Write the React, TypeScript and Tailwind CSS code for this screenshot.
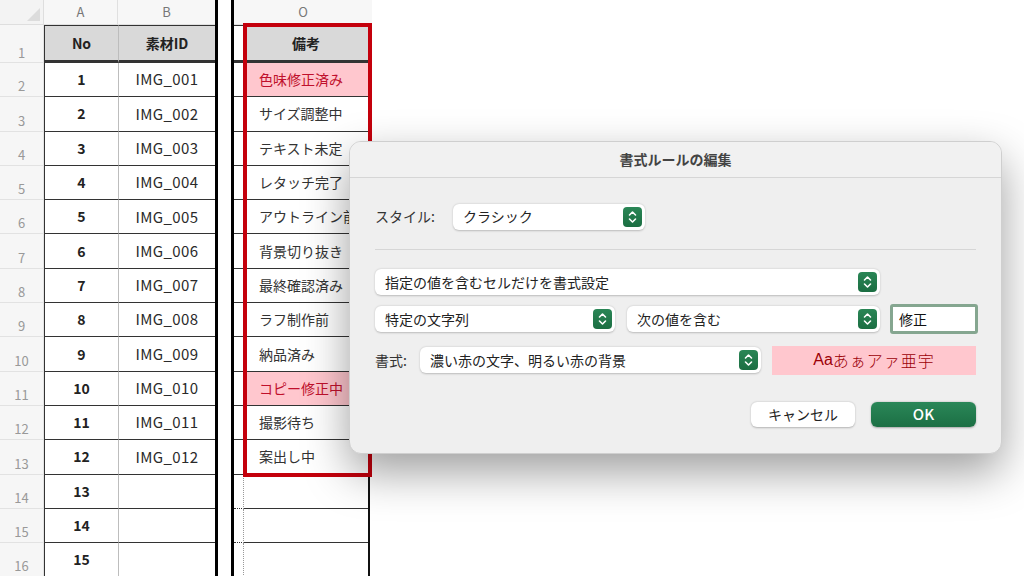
import React from "react";

const rows: { no: number; id: string; note: string; hit?: boolean }[] = [
  { no: 1, id: "IMG_001", note: "色味修正済み", hit: true },
  { no: 2, id: "IMG_002", note: "サイズ調整中" },
  { no: 3, id: "IMG_003", note: "テキスト未定" },
  { no: 4, id: "IMG_004", note: "レタッチ完了" },
  { no: 5, id: "IMG_005", note: "アウトライン前" },
  { no: 6, id: "IMG_006", note: "背景切り抜き" },
  { no: 7, id: "IMG_007", note: "最終確認済み" },
  { no: 8, id: "IMG_008", note: "ラフ制作前" },
  { no: 9, id: "IMG_009", note: "納品済み" },
  { no: 10, id: "IMG_010", note: "コピー修正中", hit: true },
  { no: 11, id: "IMG_011", note: "撮影待ち" },
  { no: 12, id: "IMG_012", note: "案出し中" },
  { no: 13, id: "", note: "" },
  { no: 14, id: "", note: "" },
  { no: 15, id: "", note: "" },
];

function Bar() {
  return <div className="w-[3px] shrink-0 self-stretch bg-black" />;
}

function Gap() {
  return <div className="w-[13px] shrink-0 self-stretch bg-white" />;
}

function Stepper() {
  return (
    <div className="flex h-[20px] w-[19px] items-center justify-center rounded-[4px] bg-gradient-to-b from-[#2a8656] to-[#1b6e42]">
      <svg width="9" height="14" viewBox="0 0 9 14" fill="none">
        <path d="M1.5 5L4.5 2L7.5 5" stroke="white" strokeWidth="1.6" strokeLinecap="round" strokeLinejoin="round" />
        <path d="M1.5 9L4.5 12L7.5 9" stroke="white" strokeWidth="1.6" strokeLinecap="round" strokeLinejoin="round" />
      </svg>
    </div>
  );
}

function Select({ text, className }: { text: string; className: string }) {
  return (
    <div
      className={
        "flex h-[26px] shrink-0 items-center justify-between rounded-[6px] bg-white pl-[10px] pr-[3px] text-[14px] text-[#222] shadow-[0_0.5px_2px_rgba(0,0,0,0.22)] " +
        className
      }
    >
      <span>{text}</span>
      <Stepper />
    </div>
  );
}

export default function App() {
  return (
    <div
      className="relative h-[576px] w-[1024px] overflow-hidden bg-white"
      style={{ fontFamily: '"Noto Sans CJK JP", "Noto Sans", sans-serif' }}
    >
      {/* column letters */}
      <div className="flex h-[25px]">
        <div className="relative w-[44px] shrink-0 border-r border-b border-[#dedede] bg-[#f3f3f3]">
          <svg className="absolute right-[3px] bottom-[3px]" width="13" height="13" viewBox="0 0 13 13">
            <polygon points="13,0 13,13 0,13" fill="#dcdcdc" />
          </svg>
        </div>
        <div className="flex w-[74px] shrink-0 items-center justify-center border-r border-b border-[#e0e0e0] bg-[#f7f7f7] text-[13px] text-[#777]">
          A
        </div>
        <div className="flex w-[97px] shrink-0 items-center justify-center border-b border-[#e0e0e0] bg-[#f7f7f7] text-[13px] text-[#777]">
          B
        </div>
        <Bar />
        <Gap />
        <Bar />
        <div className="flex w-[138px] shrink-0 items-center justify-center border-b border-[#e0e0e0] bg-[#f7f7f7] text-[13px] text-[#777]">
          O
        </div>
      </div>

      {/* header row */}
      <div className="flex h-[38px]">
        <div className="flex w-[44px] shrink-0 items-start justify-center border-r border-b border-[#e2e2e2] bg-[#f6f6f6] pt-[18px] text-[13px] leading-[20px] text-[#999]">
          1
        </div>
        <div className="flex w-[74px] shrink-0 items-center justify-center border-y-[3px] border-l-[1.5px] border-t-[1.5px] border-[#333] border-b-double bg-[#d9d9d9] text-[14px] font-bold text-[#222]">
          No
        </div>
        <div className="flex w-[97px] shrink-0 items-center justify-center border-y-[3px] border-l border-t-[1.5px] border-l-[#bdbdbd] border-y-[#333] border-b-double bg-[#d9d9d9] text-[14px] font-bold text-[#222]">
          素材ID
        </div>
        <Bar />
        <Gap />
        <Bar />
        <div className="w-[10px] shrink-0 border-y-[3px] border-t-[1.5px] border-[#333] border-b-double bg-white" />
        <div className="flex w-[124px] shrink-0 items-center justify-center border-y-[3px] border-t-[1.5px] border-[#333] border-b-double bg-[#d9d9d9] text-[14px] font-bold text-[#222]">
          備考
        </div>
        <div className="w-[2px] shrink-0 bg-[#111]" />
      </div>

      {/* data rows */}
      {rows.map((r, i) => (
        <div key={r.no} className="flex h-[34.3px]">
          <div className="flex w-[44px] shrink-0 items-end justify-center border-r border-b border-[#e2e2e2] bg-[#f6f6f6] text-[13px] leading-[20px] text-[#999]">
            {i + 2}
          </div>
          <div className="flex w-[74px] shrink-0 items-center justify-center border-b border-l-[1.5px] border-[#333] text-[14px] font-bold text-[#222]">
            {r.no}
          </div>
          <div className="flex w-[97px] shrink-0 items-center justify-center border-b border-l border-l-[#bdbdbd] border-b-[#333] text-[15px] tracking-[0.4px] text-[#2a2a2a]">
            {r.id}
          </div>
          <Bar />
          <Gap />
          <Bar />
          <div className={"w-[10px] shrink-0 border-b border-[#333] bg-white " + (i >= 12 ? "border-r border-r-[#999] border-dotted" : "")} />
          <div
            className={
              "flex w-[124px] shrink-0 items-center overflow-hidden whitespace-nowrap border-b border-[#333] pl-[15px] text-[14px] " +
              (r.hit ? "bg-[#ffc7ce] text-[#c0102c]" : "text-[#333]")
            }
          >
            {r.note}
          </div>
          <div className="w-[2px] shrink-0 bg-[#111]" />
        </div>
      ))}

      {/* highlight frame around column O */}
      <div className="absolute top-[23px] left-[243px] h-[454px] w-[129px] border-4 border-[#c4000c]" />

      {/* dialog */}
      <div className="absolute top-[141px] left-[349px] flex w-[653px] flex-col overflow-hidden rounded-[12px] border border-[#cfcfcf] bg-[#efefef] shadow-[0_18px_45px_rgba(0,0,0,0.38)]">
        <div className="flex h-[36px] items-center justify-center border-b border-[#d6d6d6] bg-[#f1f1f1] text-[14px] font-bold text-[#444]">
          書式ルールの編集
        </div>
        <div className="flex flex-col px-[25px] pt-[26px] pb-[26px] text-[14px] text-[#333]">
          <div className="flex h-[25px] items-center">
            <span className="w-[78px]">スタイル:</span>
            <Select text="クラシック" className="w-[192px]" />
          </div>
          <div className="mt-[20px] h-px bg-[#d6d6d6]" />
          <div className="mt-[19px] flex h-[26px] items-center">
            <Select text="指定の値を含むセルだけを書式設定" className="w-[505px]" />
          </div>
          <div className="mt-[11px] flex h-[26px] items-center">
            <Select text="特定の文字列" className="w-[240px]" />
            <Select text="次の値を含む" className="ml-[12px] w-[253px]" />
            <div className="ml-[10px] flex h-[30px] w-[88px] shrink-0 items-center rounded-[3px] border-[3px] border-[#85a690] bg-white pl-[6px] text-[14px] text-[#111]">
              修正
            </div>
          </div>
          <div className="mt-[15px] flex h-[26px] items-center">
            <span className="w-[46px]">書式:</span>
            <Select text="濃い赤の文字、明るい赤の背景" className="w-[341px]" />
            <div className="ml-[11px] flex h-[29px] w-[204px] shrink-0 items-center justify-center bg-[#ffc7ce] text-[16px] text-[#9c0006]">
              <span style={{ fontFamily: '"Liberation Sans", sans-serif' }}>Aa</span>
              <span className="font-light tracking-[1px]">あぁアァ亜宇</span>
            </div>
          </div>
          <div className="mt-[29px] flex h-[25px] justify-end gap-[16px]">
            <div className="flex w-[104px] items-center justify-center rounded-[6px] bg-white text-[14px] text-[#222] shadow-[0_0.5px_2px_rgba(0,0,0,0.25)]">
              キャンセル
            </div>
            <div className="flex w-[105px] items-center justify-center rounded-[6px] bg-gradient-to-b from-[#2a8758] to-[#1c6f44] text-[15px] font-medium text-white shadow-[0_0.5px_2px_rgba(0,0,0,0.3)]">
              OK
            </div>
          </div>
        </div>
      </div>
    </div>
  );
}
